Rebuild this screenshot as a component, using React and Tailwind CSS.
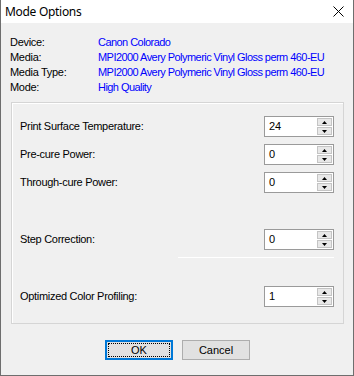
import React from 'react';

const info = [
  { label: 'Device:', value: 'Canon Colorado' },
  { label: 'Media:', value: 'MPI2000 Avery Polymeric Vinyl Gloss perm 460-EU' },
  { label: 'Media Type:', value: 'MPI2000 Avery Polymeric Vinyl Gloss perm 460-EU' },
  { label: 'Mode:', value: 'High Quality' },
];

function SpinBox({ value }) {
  return (
    <div className="flex h-[21px] w-[70px] border border-[#9a9a9a] bg-white">
      <div className="flex-1 pl-[4px] pt-[2px] text-[11px] leading-[14px] text-black">{value}</div>
      <div className="flex w-[16px] flex-col gap-px py-px pr-px">
        <div className="flex flex-1 items-center justify-center border border-[#c4c4c4] bg-[#e8e8e8]">
          <svg width="5" height="3" viewBox="0 0 5 3"><path d="M2.5 0L5 3H0z" fill="#000" /></svg>
        </div>
        <div className="flex flex-1 items-center justify-center border border-[#c4c4c4] bg-[#e8e8e8]">
          <svg width="5" height="3" viewBox="0 0 5 3"><path d="M0 0H5L2.5 3z" fill="#000" /></svg>
        </div>
      </div>
    </div>
  );
}

function Row({ label, value, className = '' }) {
  return (
    <div className={`flex items-center justify-between ${className}`}>
      <span className="text-[11px] tracking-[-0.3px] text-black">{label}</span>
      <SpinBox value={value} />
    </div>
  );
}

export default function App() {
  return (
    <div
      className="flex h-[376px] w-[354px] flex-col border-x border-b border-[#6e6e6e] bg-[#f0f0f0]"
      style={{ fontFamily: '"Liberation Sans", Arial, sans-serif' }}
    >
      {/* title bar */}
      <div className="flex h-[23px] items-center justify-between bg-white pl-[4px] pr-[9px]">
        <span className="text-[12px] tracking-[-0.3px] text-black" style={{ fontFamily: '"Noto Sans", sans-serif' }}>Mode Options</span>
        <svg width="11" height="11" viewBox="0 0 11 11">
          <path d="M0.5 0.5L10.5 10.5M10.5 0.5L0.5 10.5" stroke="#000" strokeWidth="1" />
        </svg>
      </div>

      {/* info */}
      <div className="h-[79px] pl-[9px] pt-[11px]">
        {info.map((r) => (
          <div key={r.label} className="grid h-[15px] grid-cols-[88px_1fr] items-center text-[11px]">
            <span className="tracking-[-0.3px] text-black">{r.label}</span>
            <span className="tracking-[-0.55px] text-[#0000ff]">{r.value}</span>
          </div>
        ))}
      </div>

      {/* group box */}
      <div className="ml-[10px] h-[222px] w-[333px] border border-[#d5d5d5] pl-[8px] pr-[9px] pt-[13px] shadow-[inset_1px_1px_0_#fff]">
        <Row label="Print Surface Temperature:" value="24" />
        <Row label="Pre-cure Power:" value="0" className="mt-[7px]" />
        <Row label="Through-cure Power:" value="0" className="mt-[7px]" />
        <Row label="Step Correction:" value="0" className="mt-[36px]" />
        <div className="ml-auto mt-[7px] h-px w-[156px] bg-white" />
        <Row label="Optimized Color Profiling:" value="1" className="mt-[28px]" />
      </div>

      {/* buttons */}
      <div className="mt-[16px] flex gap-[9px] pl-[104px]">
        <button className="relative h-[20px] w-[68px] border-2 border-[#0078d7] bg-[#e1e1e1] text-[11px] text-black">
          <span className="absolute inset-[1px] border border-dotted border-black" />
          OK
        </button>
        <button className="h-[20px] w-[68px] border border-[#adadad] bg-[#e1e1e1] text-[11px] text-black">
          Cancel
        </button>
      </div>
    </div>
  );
}
